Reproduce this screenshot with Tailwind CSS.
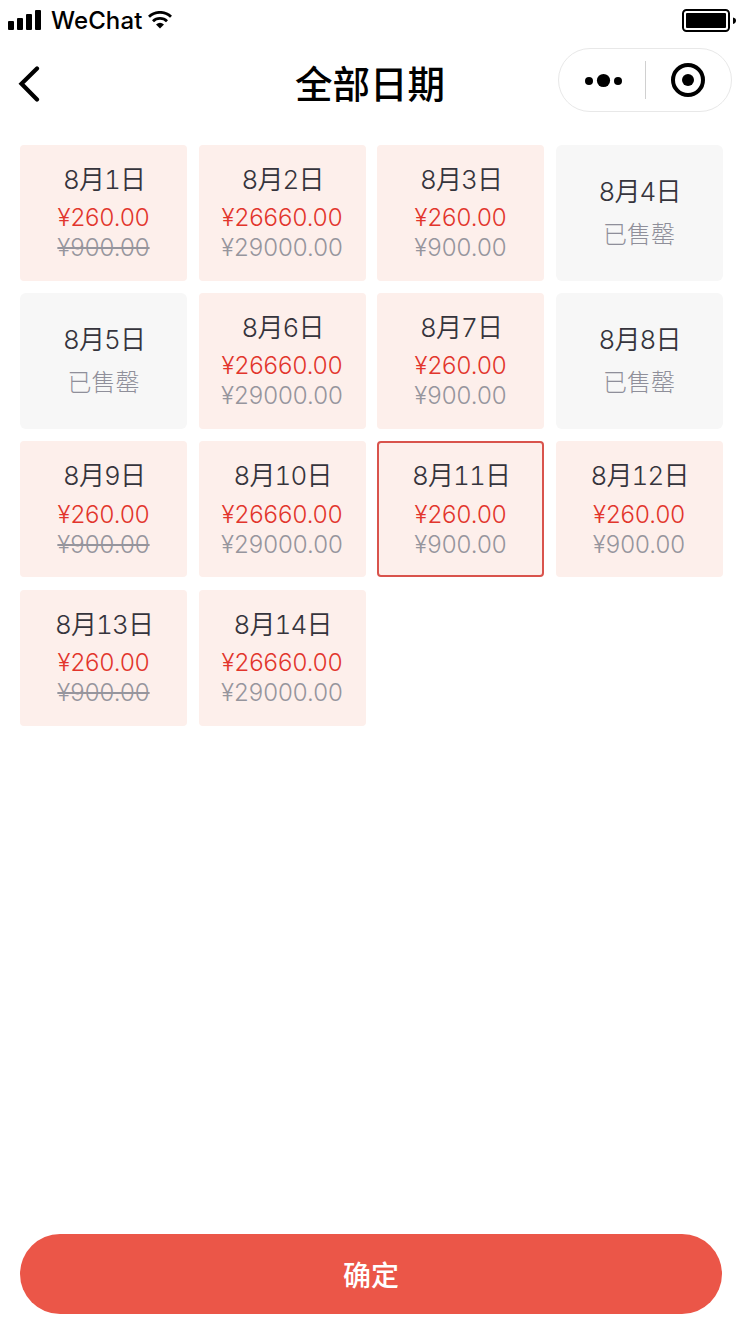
<!DOCTYPE html>
<html lang="zh-CN">
<head>
    <meta charset="UTF-8">
    <meta name="viewport" content="width=device-width, initial-scale=1.0">
    <title>全部日期</title>
    <script src="https://cdn.jsdelivr.net/npm/@tailwindcss/browser@4"></script>
</head>
<body class="bg-white font-['Inter','Noto_Sans_CJK_SC',sans-serif]">
    <div class="flex flex-col w-[746px] h-[1332px] overflow-hidden">

        <!-- Status bar -->
        <div class="flex items-center h-10 pl-2 pr-2.5">
            <svg class="w-[34px] h-5" viewBox="0 0 34 20">
                <rect x="0" y="11" width="6" height="9" rx="1"/>
                <rect x="9" y="8" width="6" height="12" rx="1"/>
                <rect x="18" y="4" width="6" height="16" rx="1"/>
                <rect x="27" y="0" width="6" height="20" rx="1"/>
            </svg>
            <span class="ml-[9px] w-[91px] pt-0.5 text-[24px] leading-10 tracking-[0.1px] font-[450]">WeChat</span>
            <svg class="ml-1.5 w-6 h-[18px]" viewBox="0 0 24 18" fill="none" stroke="#000" stroke-width="2.8">
                <path d="M1 5.700C7 -.1 17 -.1 23 5.700"/>
                <path d="M5 10.200C8.800 6.400 15.200 6.400 19 10.200"/>
                <path d="M8 13.500Q12 10.200 16 13.500L12 17.600Z" fill="#000" stroke="none"/>
            </svg>
            <svg class="ml-auto w-[54px] h-6" viewBox="0 0 54 24">
                <rect x="1" y="2" width="46" height="21" rx="3.500" fill="none" stroke="#000" stroke-width="2"/>
                <rect x="4" y="5" width="40" height="15" rx="1"/>
                <path d="M51 9.500Q54 10 54 12.500T51 16Z"/>
            </svg>
        </div>

        <!-- Nav bar -->
        <header class="grid grid-cols-[1fr_auto_1fr] items-center h-20 pl-[18px] pr-3.5">
            <svg class="mt-2 w-[22px] h-9" viewBox="0 0 22 36" fill="none" stroke="#000" stroke-width="4.2" stroke-linecap="round">
                <path d="M19 2.500L3.500 17.700L19 33.500"/>
            </svg>
            <h1 class="mt-1 ml-[-10px] text-[37.5px] leading-none font-medium font-['Noto_Sans_CJK_SC',sans-serif]">全部日期</h1>
            <div class="justify-self-end flex items-center w-[174px] h-16 rounded-full border border-[#e8e8e8]">
                <svg class="w-[172px] h-[62px]" viewBox="0 0 172 62">
                    <circle cx="30" cy="32" r="4"/>
                    <circle cx="44.500" cy="31.500" r="6.600"/>
                    <circle cx="59" cy="32" r="4"/>
                    <path d="M86.500 12V50" stroke="#d0d0d0"/>
                    <circle cx="129" cy="31" r="15" fill="none" stroke="#000" stroke-width="4"/>
                    <circle cx="129" cy="31" r="6"/>
                </svg>
            </div>
        </header>

        <!-- Dates -->
        <main id="dateGrid" class="grid grid-cols-4 gap-x-[11.5px] gap-y-[12.4px] mt-[24.5px] pl-5 pr-[23.5px]"></main>

        <!-- Confirm -->
        <footer class="mt-auto pl-5 pr-6 pb-[18px]">
            <button class="block w-full h-20 rounded-full bg-[#eb5648] text-white text-[28px] font-medium font-['Noto_Sans_CJK_SC',sans-serif]">确定</button>
        </footer>
    </div>

    <script>
        const low = { price: '¥260.00', original: '¥900.00' };
        const high = { price: '¥26660.00', original: '¥29000.00' };

        const dates = [
            { ...low, struck: true }, high, low, { soldOut: true },
            { soldOut: true }, high, low, { soldOut: true },
            { ...low, struck: true }, high, { ...low, selected: true }, low,
            { ...low, struck: true }, high
        ];

        // Build one card per day
        document.getElementById('dateGrid').innerHTML = dates.map((item, i) => {
            const day = `<div class="pl-px text-[26px] leading-[34px] tracking-[-0.9px] font-[350] tabular-nums text-[#35343c]">8月${i + 1}日</div>`;
            if (item.soldOut) {
                return `
                <div class="h-[136px] pt-[30px] rounded-md bg-[#f7f7f7] text-center">
                    ${day}
                    <div class="mt-2 text-[24px] leading-9 font-light text-[#8f8f9a]">已售罄</div>
                </div>`;
            }
            return `
                <div class="h-[136px] pt-4 rounded-sm border-2 text-center bg-[#fdefeb] ${item.selected ? 'border-[#d9534c]' : 'border-[#fdefeb]'}">
                    ${day}
                    <div class="mt-[6.5px] text-[24px] leading-[30px] font-[350] text-[#e2352c]">${item.price}</div>
                    <div class="text-[24px] leading-[29px] font-light text-[#96959d] ${item.struck ? 'line-through decoration-2' : ''}">${item.original}</div>
                </div>`;
        }).join('');
    </script>
</body>
</html>
